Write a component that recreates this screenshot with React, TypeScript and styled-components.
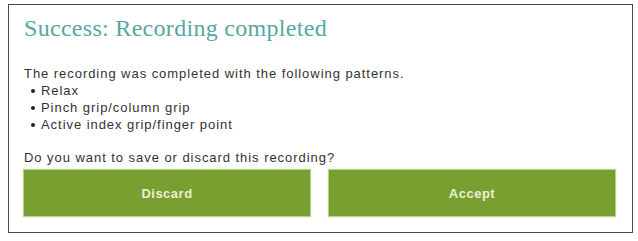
import React from 'react';
import styled, { createGlobalStyle } from 'styled-components';

const GlobalStyle = createGlobalStyle`
  html, body {
    margin: 0;
    padding: 0;
    background: #ffffff;
  }
`;

const Panel = styled.section`
  box-sizing: border-box;
  width: 625px;
  margin: 4px 0 0 8px;
  padding: 9px 17px 16px 15px;
  border: 1px solid #4a4a4a;
  background: #ffffff;
  display: flex;
  flex-direction: column;
`;

const Title = styled.h1`
  margin: 0;
  font-family: "Liberation Serif", "Times New Roman", serif;
  font-weight: normal;
  font-size: 24px;
  line-height: 28px;
  letter-spacing: 0.3px;
  color: #57a7a1;
`;

const Body = styled.div`
  margin-top: 23px;
  font-family: "Liberation Sans", Arial, sans-serif;
  font-size: 13px;
  line-height: 17px;
  letter-spacing: 0.95px;
  color: #333333;
`;

const Text = styled.p`
  margin: 0;
`;

const Patterns = styled.ul`
  margin: 0;
  padding: 0;
  list-style: none;
`;

const Pattern = styled.li`
  display: flex;
  align-items: center;
  padding-left: 7px;

  &::before {
    content: '';
    width: 4px;
    height: 4px;
    border-radius: 50%;
    background: #222222;
    margin-right: 6px;
    flex: none;
  }
`;

const Question = styled.p`
  margin: 16px 0 0;
`;

const Actions = styled.div`
  margin-top: 4px;
  display: grid;
  grid-template-columns: 1fr 1fr;
  gap: 19px;
`;

const ActionButton = styled.button`
  height: 46px;
  border: none;
  border-radius: 0;
  background: #7a9f31;
  box-shadow: 0 0 1px 1px #b9d289;
  color: #e8f1cf;
  font-family: "Liberation Sans", Arial, sans-serif;
  font-weight: bold;
  font-size: 13px;
  letter-spacing: 0.5px;
  cursor: pointer;
`;

const patterns = ['Relax', 'Pinch grip/column grip', 'Active index grip/finger point'];

export default function App() {
  return (
    <>
      <GlobalStyle />
      <Panel>
        <Title>Success: Recording completed</Title>
        <Body>
          <Text>The recording was completed with the following patterns.</Text>
          <Patterns>
            {patterns.map((p) => (
              <Pattern key={p}>{p}</Pattern>
            ))}
          </Patterns>
          <Question>Do you want to save or discard this recording?</Question>
        </Body>
        <Actions>
          <ActionButton>Discard</ActionButton>
          <ActionButton>Accept</ActionButton>
        </Actions>
      </Panel>
    </>
  );
}
